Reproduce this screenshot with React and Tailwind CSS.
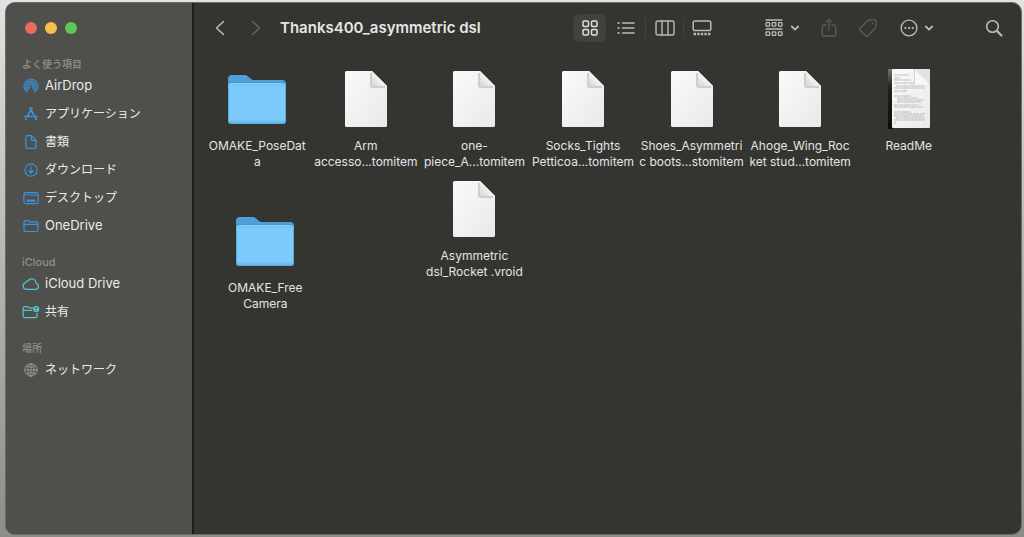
const sections = [
  {
    title: "よく使う項目",
    titleSize: "text-[10px]",
    color: "text-[#3b93e0]",
    items: [
      { label: "AirDrop", size: "text-[13px]", icon: AirDropIcon },
      { label: "アプリケーション", size: "text-xs", icon: AppsIcon },
      { label: "書類", size: "text-xs", icon: DocumentIcon },
      { label: "ダウンロード", size: "text-xs", icon: DownloadIcon },
      { label: "デスクトップ", size: "text-xs", icon: DesktopIcon },
      { label: "OneDrive", size: "text-[13px]", icon: FolderIcon },
    ],
  },
  {
    title: "iCloud",
    titleSize: "text-[11px]",
    color: "text-[#55c4d8]",
    items: [
      { label: "iCloud Drive", size: "text-[13px]", icon: CloudIcon },
      { label: "共有", size: "text-xs", icon: SharedFolderIcon },
    ],
  },
  {
    title: "場所",
    titleSize: "text-[10px]",
    color: "text-[#989894]",
    items: [{ label: "ネットワーク", size: "text-xs", icon: GlobeIcon }],
  },
];

const files = [
  { lines: ["OMAKE_PoseDat", "a"], art: FolderArt, cell: "col-start-1" },
  { lines: ["Arm", "accesso...tomitem"], art: FileArt, cell: "col-start-2" },
  { lines: ["one-", "piece_A...tomitem"], art: FileArt, cell: "col-start-3" },
  { lines: ["Socks_Tights", "Petticoa...tomitem"], art: FileArt, cell: "col-start-4" },
  { lines: ["Shoes_Asymmetri", "c boots...stomitem"], art: FileArt, cell: "col-start-5" },
  { lines: ["Ahoge_Wing_Roc", "ket stud...tomitem"], art: FileArt, cell: "col-start-6" },
  { lines: ["ReadMe"], art: TextFileArt, cell: "col-start-7" },
  { lines: ["OMAKE_Free", "Camera"], art: FolderArt, cell: "col-start-1 mt-8 ml-4" },
  { lines: ["Asymmetric", "dsl_Rocket .vroid"], art: FileArt, cell: "col-start-3" },
];

function Icon({ w = 16, h = 16, sw = 1.2, children }) {
  return (
    <svg
      width={w}
      height={h}
      viewBox={`0 0 ${w} ${h}`}
      fill="none"
      stroke="currentColor"
      strokeWidth={sw}
      strokeLinecap="round"
      strokeLinejoin="round"
      className="shrink-0"
      aria-hidden="true"
    >
      {children}
    </svg>
  );
}

function AirDropIcon() {
  return (
    <Icon sw={1.1}>
      <path d="M4.3 14A7 7 0 1 1 11.7 14" />
      <path d="M5 12.3A5.2 5.2 0 1 1 11 12.3" />
      <path d="M5.8 10.7A3.4 3.4 0 1 1 10.2 10.7" />
      <path d="M6.9 9.3A1.7 1.7 0 1 1 9.1 9.3" />
      <path d="M8 9L6 14.4h4z" fill="#4f4f4b" stroke="none" />
    </Icon>
  );
}

function AppsIcon() {
  return (
    <Icon sw={1.7}>
      <path d="M7 2l5.8 10.6M9 2L4.3 10.4M1.8 10.5h7.4M12 10.5h2.2M3.2 12.8l-.5.9M12.8 12.6l.6 1.1" />
    </Icon>
  );
}

function DocumentIcon() {
  return (
    <Icon sw={1.3}>
      <path d="M4 1.6h4.6l4.4 4.5v7a1.3 1.3 0 0 1-1.3 1.3H4.2a1.3 1.3 0 0 1-1.3-1.3V2.9A1.3 1.3 0 0 1 4.2 1.6z" />
      <path d="M8.4 1.8v3.6a1 1 0 0 0 1 1h3.4" />
    </Icon>
  );
}

function DownloadIcon() {
  return (
    <Icon>
      <circle cx="8" cy="8" r="6.1" />
      <path d="M8 4.8v6M5.6 8.6L8 11l2.4-2.4" />
    </Icon>
  );
}

function DesktopIcon() {
  return (
    <Icon>
      <rect x="0.9" y="2.6" width="14.2" height="11" rx="1.8" />
      <path d="M1 5h14" />
      <rect x="3.6" y="9.6" width="8.8" height="2.2" rx="0.6" fill="currentColor" stroke="none" />
    </Icon>
  );
}

function FolderIcon() {
  return (
    <Icon>
      <path d="M1 11.9V4.2a1.6 1.6 0 0 1 1.6-1.6h2.5c.9 0 1.3 1.2 2.2 1.2h6a1.6 1.6 0 0 1 1.6 1.6v6.5a1.6 1.6 0 0 1-1.6 1.6H2.6A1.6 1.6 0 0 1 1 11.9z" />
      <path d="M1 6.3h14" />
    </Icon>
  );
}

function CloudIcon() {
  return (
    <Icon w={18}>
      <path d="M4.400 13.400a3.300 3.300 0 0 1-.8-6.500 2.100 2.100 0 0 1 2.500-2.100 4.300 4.300 0 0 1 7.900 2.500 3.100 3.100 0 0 1-.2 6.100z" />
    </Icon>
  );
}

function SharedFolderIcon() {
  return (
    <Icon w={18}>
      <path d="M10.4 3.9H7.6C6.7 3.9 6.3 2.7 5.4 2.7H2.8a1.6 1.6 0 0 0-1.6 1.6V12a1.6 1.6 0 0 0 1.6 1.6h10.6A1.6 1.6 0 0 0 15 12V9.4M1.2 6.3h8.6" />
      <circle cx="14.2" cy="5" r="3.1" fill="currentColor" stroke="none" />
      <circle cx="14.2" cy="4.2" r="0.9" fill="#4f4f4b" stroke="none" />
      <path d="M12.7 6.7a1.6 1.2 0 0 1 3 0z" fill="#4f4f4b" stroke="none" />
    </Icon>
  );
}

function GlobeIcon() {
  return (
    <Icon sw={0.9}>
      <circle cx="8" cy="8" r="6.2" />
      <ellipse cx="8" cy="8" rx="3" ry="6.2" />
      <path d="M8 1.8v12.4M1.8 8h12.4M3.2 4.4q4.8 2 9.6 0M3.2 11.6q4.8-2 9.6 0" />
    </Icon>
  );
}

function FolderArt() {
  return (
    <svg width="60" height="54" viewBox="0 -2 60 54" aria-hidden="true">
      <defs>
        <linearGradient id="folder-front" x1="0" y1="0" x2="0" y2="1">
          <stop offset="0" stopColor="#73c2f4" />
          <stop offset="0.12" stopColor="#7dcbfa" />
          <stop offset="0.88" stopColor="#7dcbfa" />
          <stop offset="1" stopColor="#5fb0e6" />
        </linearGradient>
      </defs>
      <path d="M1 5a4 4 0 0 1 4-4h12c2 0 3 .6 4.400 1.800l2.600 2.200c1 .8 2 1 3.400 1H55a4 4 0 0 1 4 4v35H1z" fill="#4f9fd8" />
      <path d="M1.500 8.500h57" stroke="#4594cf" strokeWidth="1" />
      <rect x="1" y="9" width="58" height="41" rx="3.500" fill="url(#folder-front)" />
      <path d="M1.500 13v33.500a3 3 0 0 0 3 3h51a3 3 0 0 0 3-3V13" fill="none" stroke="#5aaae0" strokeWidth="1" />
      <path d="M4 9.500h52" stroke="#88d0fb" strokeWidth="0.800" />
    </svg>
  );
}

function PageShades() {
  return (
    <defs>
      <linearGradient id="page" x1="0" y1="0" x2="1" y2="1">
        <stop offset="0" stopColor="#fafafa" />
        <stop offset="1" stopColor="#e9e9e9" />
      </linearGradient>
      <linearGradient id="fold" x1="0" y1="1" x2="0.6" y2="0.4">
        <stop offset="0" stopColor="#d4d4d4" />
        <stop offset="1" stopColor="#fbfbfb" />
      </linearGradient>
    </defs>
  );
}

function FileArt() {
  return (
    <svg width="44" height="58" viewBox="0 0 44 58" aria-hidden="true">
      <PageShades />
      <path d="M1.500 1H28l15 15v39.500a1.500 1.500 0 0 1-1.500 1.500h-39A1.500 1.500 0 0 1 1 55.500v-53A1.500 1.500 0 0 1 2.500 1z" fill="url(#page)" />
      <path d="M27 3v12.500q0 1.500 1.500 1.500H41" fill="none" stroke="#c2c2c2" strokeWidth="1.500" />
      <path d="M28 1l15 15H29.500a1.500 1.500 0 0 1-1.500-1.500z" fill="url(#fold)" />
      <path d="M28 1l15 15" stroke="#bdbdbd" strokeWidth="0.600" />
    </svg>
  );
}

function TextFileArt() {
  // y, start, end of each line of print on the thumbnail
  const print = [
    [6, 7, 23], [9, 7, 14], [11, 7, 24], [14, 7, 27], [17, 9, 37], [19, 7, 38], [22, 7, 20],
    [27, 7, 24], [29, 10, 30], [31, 10, 37], [33, 10, 34], [36, 7, 32],
    [38, 7, 36], [43, 7, 24], [45, 7, 38], [47, 7, 36], [49, 9, 38], [51, 7, 38], [54, 7, 9],
  ];
  return (
    <svg width="44" height="60" viewBox="0 0 44 60" aria-hidden="true">
      <defs>
        <linearGradient id="spine" x1="0" y1="0" x2="0" y2="1">
          <stop offset="0" stopColor="#777774" />
          <stop offset="0.3" stopColor="#222220" />
          <stop offset="1" stopColor="#0c0c0b" />
        </linearGradient>
      </defs>
      <PageShades />
      <rect x="1" y="0" width="5" height="60" fill="url(#spine)" />
      <rect x="5" y="0" width="38" height="59" rx="1" fill="url(#page)" />
      {print.map(([y, from, to]) => (
        <path key={y} d={`M${from} ${y}H${to}`} stroke="#ababab" strokeWidth="0.800" strokeDasharray={`${3 + (y % 4)} .6 2 .5`} />
      ))}
      <path d="M27 0v15q0 1.500 1.500 1.500H43V0z" fill="#d2d2d2" />
      <path d="M28 0l15 16H29.500a1.500 1.500 0 0 1-1.500-1.500z" fill="#f8f8f8" />
      <path d="M28 0h14a1 1 0 0 1 1 1v15z" fill="#e2e2e2" />
    </svg>
  );
}

function ToolButton({ label, className = "", children }) {
  return (
    <button
      type="button"
      aria-label={label}
      className={`flex h-7 shrink-0 items-center justify-center rounded-md ${className}`}
    >
      {children}
    </button>
  );
}

function ChevronDown() {
  return (
    <Icon w={10} h={8} sw={1.8}>
      <path d="M1.800 2.500L5 5.700l3.200-3.200" />
    </Icon>
  );
}

function Sidebar() {
  return (
    <aside className="w-[188px] shrink-0 border-r-2 border-[#1e1e1c] bg-[#4f4f4b]">
      <div className="flex gap-2 pt-[19px] pl-[19px]">
        <button type="button" aria-label="閉じる" className="size-3 rounded-full bg-[#ed6a5f]" />
        <button type="button" aria-label="しまう" className="size-3 rounded-full bg-[#f5bf4f]" />
        <button type="button" aria-label="拡大" className="size-3 rounded-full bg-[#62c655]" />
      </div>
      <nav className="mt-[22px] flex flex-col gap-3.5 pl-4">
        {sections.map((section) => (
          <section key={section.title}>
            <h2 className={`h-4 leading-4 font-medium text-[#8f8f8b] ${section.titleSize}`}>
              {section.title}
            </h2>
            <ul>
              {section.items.map(({ label, size, icon: ItemIcon }) => (
                <li key={label}>
                  <a href="#" className="flex h-7 items-center gap-[5px] text-[#ebebe9]">
                    <span className={`flex w-[18px] shrink-0 justify-center ${section.color}`}>
                      <ItemIcon />
                    </span>
                    <span className={`whitespace-nowrap ${size}`}>{label}</span>
                  </a>
                </li>
              ))}
            </ul>
          </section>
        ))}
      </nav>
    </aside>
  );
}

function Toolbar() {
  return (
    <header className="flex h-[50px] items-center pr-[9px] pl-2 text-[#b9b9b6]">
      <ToolButton label="戻る" className="w-9">
        <Icon sw={1.6}>
          <path d="M11.500 1.500L4.500 8l7 6.500" />
        </Icon>
      </ToolButton>
      <ToolButton label="進む" className="w-9 text-[#62625f]">
        <Icon sw={1.6}>
          <path d="M4.500 1.500l7 6.500-7 6.500" />
        </Icon>
      </ToolButton>
      <h1 className="ml-1.5 text-[15px] font-semibold whitespace-nowrap text-[#e6e6e4]">
        Thanks400_asymmetric dsl
      </h1>

      <div className="ml-auto flex items-center">
        <ToolButton label="アイコン" className="w-[33px] bg-[#41413e] text-[#dededc]">
          <Icon sw={1.5}>
            <rect x="1" y="1" width="5.500" height="5.500" rx="1.200" />
            <rect x="9.500" y="1" width="5.500" height="5.500" rx="1.200" />
            <rect x="1" y="9.500" width="5.500" height="5.500" rx="1.200" />
            <rect x="9.500" y="9.500" width="5.500" height="5.500" rx="1.200" />
          </Icon>
        </ToolButton>
        <ToolButton label="リスト" className="ml-0.5 w-9">
          <Icon w={18} sw={1.4}>
            <path d="M5.500 3h11.500M5.500 8h11.500M5.500 13h11.500" />
            <path d="M1.500 3h.1M1.500 8h.1M1.500 13h.1" strokeWidth="2.200" />
          </Icon>
        </ToolButton>
        <div className="mx-px h-5 w-px bg-[#434340]" />
        <ToolButton label="カラム" className="w-9">
          <Icon w={20} sw={1.4}>
            <rect x="1" y="1" width="18" height="14" rx="1.800" />
            <path d="M7 1v14M13 1v14" />
          </Icon>
        </ToolButton>
        <div className="h-5 w-px bg-[#434340]" />
        <ToolButton label="ギャラリー" className="w-9">
          <Icon w={20} sw={1.5}>
            <rect x="1.200" y="1" width="17.600" height="9.500" rx="1.800" />
            <path d="M1.600 14h17" strokeWidth="2.400" strokeDasharray="2.400 1.200" strokeLinecap="butt" />
          </Icon>
        </ToolButton>
      </div>

      <ToolButton label="グループ" className="ml-11 w-9 gap-[7px]">
        <Icon w={18} h={18} sw={1.3}>
          <path d="M1 1h16M1 10h16" />
          <rect x="1" y="3.600" width="3.600" height="3.600" rx=".6" />
          <rect x="7.200" y="3.600" width="3.600" height="3.600" rx=".6" />
          <rect x="13.400" y="3.600" width="3.600" height="3.600" rx=".6" />
          <rect x="1" y="12.800" width="3.600" height="3.600" rx=".6" />
          <rect x="7.200" y="12.800" width="3.600" height="3.600" rx=".6" />
          <rect x="13.400" y="12.800" width="3.600" height="3.600" rx=".6" />
        </Icon>
        <ChevronDown />
      </ToolButton>
      <ToolButton label="共有" className="ml-[11px] w-9 text-[#595956]">
        <Icon w={16} h={20} sw={1.400}>
          <path d="M5 7H2.800A1.500 1.500 0 0 0 1.300 8.500v8A1.500 1.500 0 0 0 2.800 18h10.400a1.500 1.500 0 0 0 1.500-1.500v-8A1.500 1.500 0 0 0 13.200 7H11" />
          <path d="M8 12V1.500M5 4.300l3-3 3 3" />
        </Icon>
      </ToolButton>
      <ToolButton label="タグ" className="ml-[3px] w-9 text-[#595956]">
        <Icon w={20} h={20} sw={1.400}>
          <path d="M10.800 2.200l5.600-.6c1.200-.1 2 .7 1.900 1.900l-.5 5.400c-.1.700-.3 1.200-.8 1.700l-7 7c-.8.800-1.800.8-2.600 0l-5-5c-.8-.8-.8-1.800 0-2.600l6.700-6.900c.5-.5 1-.8 1.700-.9z" />
          <circle cx="14.600" cy="5.400" r="0.900" fill="currentColor" stroke="none" />
        </Icon>
      </ToolButton>
      <ToolButton label="その他" className="ml-[13px] w-9 gap-1.5">
        <Icon w={18} h={18} sw={1.4}>
          <circle cx="9" cy="9" r="7.900" />
          <path d="M5.300 9h.1M9 9h.1M12.700 9h.1" strokeWidth="2.200" />
        </Icon>
        <ChevronDown />
      </ToolButton>
      <ToolButton label="検索" className="ml-[41px] w-9">
        <Icon w={18} h={18} sw={1.6}>
          <circle cx="7.500" cy="7.500" r="5.800" />
          <path d="M12 12l4.500 4.500" strokeWidth="2.200" />
        </Icon>
      </ToolButton>
    </header>
  );
}

function FileItem({ lines, art: Art, cell }) {
  return (
    <li className={`flex flex-col items-center ${cell}`}>
      <div className="flex h-[58px] items-center">
        <Art />
      </div>
      <p className="mt-2.5 text-center text-xs leading-4 whitespace-nowrap text-[#e4e4e2]">
        {lines.map((line) => (
          <span key={line} className="block">
            {line}
          </span>
        ))}
      </p>
    </li>
  );
}

export default function App() {
  return (
    <div className="flex min-h-screen bg-linear-to-b from-[#e2e2e2] via-[#b4b4b4] to-[#8c8c8a] pt-0.5 pr-0.5 pb-0.5 pl-[5px] font-['Inter','Noto_Sans_CJK_JP',sans-serif]">
      <div className="flex flex-1 overflow-hidden rounded-[10px] border border-[#6c6c69] bg-[#343431]">
        <Sidebar />
        <main className="min-w-0 flex-1">
          <Toolbar />
          <ul className="grid grid-cols-7 gap-y-2.5 pt-[17px] pr-[58px] pl-[9px]">
            {files.map((file) => (
              <FileItem key={file.lines[0]} {...file} />
            ))}
          </ul>
        </main>
      </div>
    </div>
  );
}
